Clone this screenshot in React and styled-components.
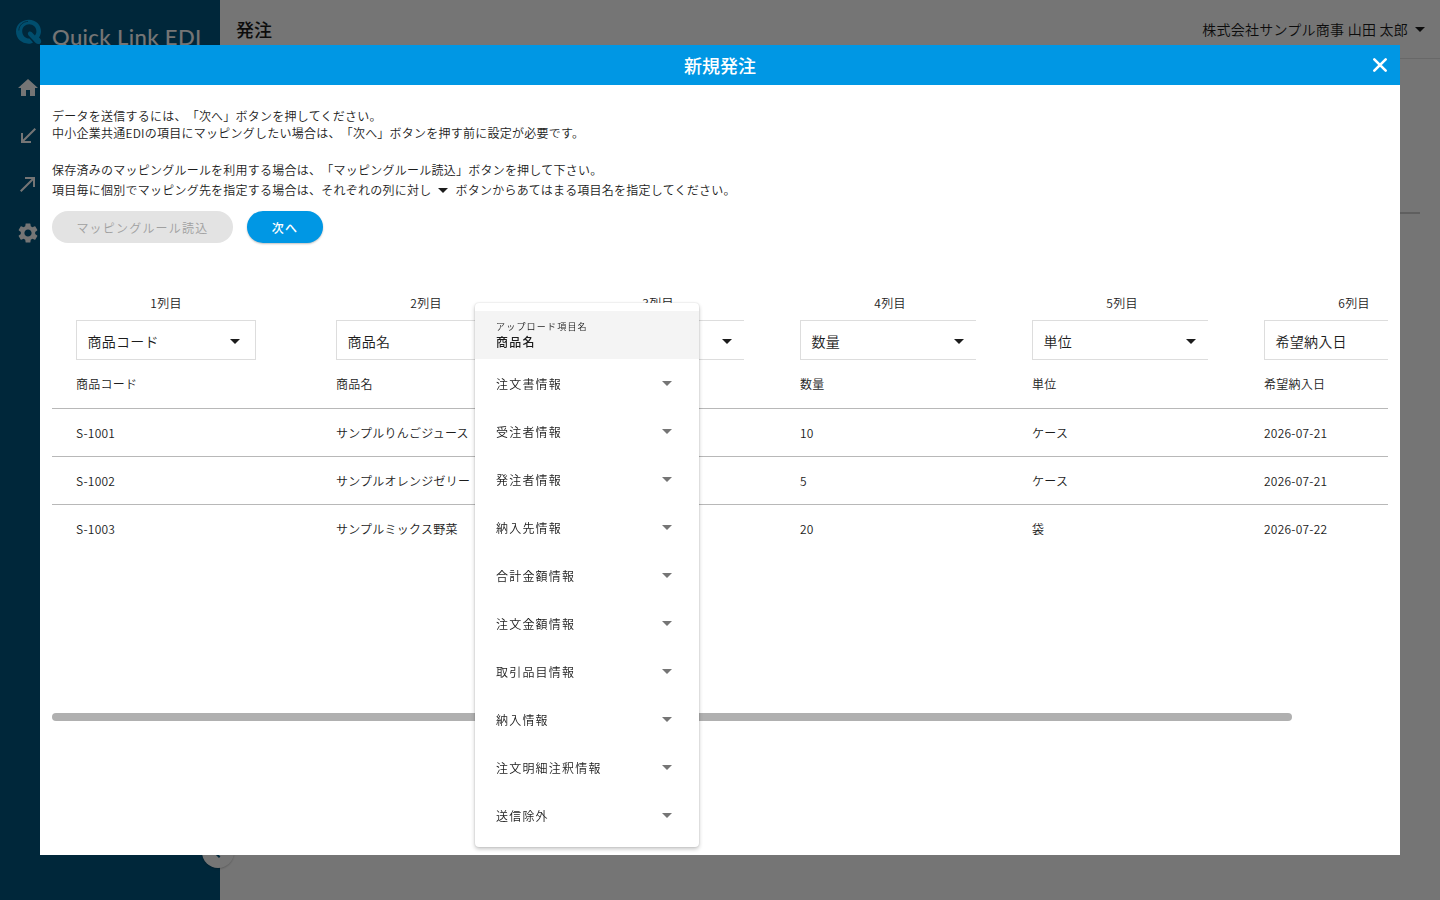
import React from 'react';
import styled, { createGlobalStyle } from 'styled-components';
import {
  MdArrowDropDown,
  MdCallMade,
  MdCallReceived,
  MdChevronLeft,
  MdHome,
  MdSettings,
} from 'react-icons/md';

const Colors = {
  NAVY: '#00557e',
  BLUE: '#0097e4',
  LOGO: '#00aaf0',
  TEXT: '#1c1c1c',
  WHITE: '#ffffff',
  GRAY: '#e3e3e3',
  GRAY_TEXT: '#a0a0a0',
  BORDER: '#dddddd',
  ROW_LINE: '#b8b8b8',
};

const GlobalStyle = createGlobalStyle`
  * {
    box-sizing: border-box;
  }

  body {
    margin: 0;
    overflow: hidden;
    color: ${Colors.TEXT};
    font-family: 'Noto Sans CJK JP', sans-serif;
    font-size: 12px;
    font-weight: 350;
    letter-spacing: 0.02em;
    text-spacing-trim: space-all;
  }

  svg {
    display: block;
    flex: none;
  }
`;

const Page = styled.div`
  display: flex;
  width: 100vw;
  height: 100vh;
  background-color: ${Colors.WHITE};
`;

const Sidebar = styled.nav`
  position: relative;
  width: 220px;
  flex: none;
  padding: 16px 16px 0;
  color: ${Colors.WHITE};
  background-color: ${Colors.NAVY};
`;

const Brand = styled.div`
  display: flex;
  height: 36px;
`;

const BrandName = styled.span`
  margin: 8px 0 0 10px;
  font-family: Lato, sans-serif;
  font-size: 22px;
  font-weight: 500;
  line-height: 26px;
  letter-spacing: 0.4px;
  white-space: nowrap;
`;

const SideMenu = styled.div`
  display: flex;
  flex-direction: column;
  gap: 24.2px;
  margin-top: 24px;
`;

const CollapseButton = styled.button`
  position: absolute;
  right: -14px;
  bottom: 32px;
  display: flex;
  align-items: center;
  justify-content: center;
  width: 32px;
  height: 32px;
  padding: 0 2px 0 0;
  border: 0;
  border-radius: 50%;
  color: ${Colors.NAVY};
  background-color: ${Colors.WHITE};
  box-shadow: 0 1px 2px rgba(0, 0, 0, 0.2);
`;

const Main = styled.main`
  flex: 1;
`;

const TopBar = styled.header`
  display: flex;
  align-items: center;
  justify-content: space-between;
  height: 59px;
  padding: 0 8px 0 16px;
  border-bottom: 1px solid #e3e3e3;
`;

const PageTitle = styled.h1`
  margin: 0;
  font-size: 18px;
  font-weight: 500;
  letter-spacing: 0;
`;

const User = styled.div`
  display: flex;
  align-items: center;
  font-size: 14px;
`;

const TabLine = styled.div`
  margin: 153px 20px 0;
  height: 2px;
  background-color: #cfcfcf;
`;

const Overlay = styled.div`
  position: fixed;
  inset: 0;
  display: flex;
  align-items: center;
  justify-content: center;
  background-color: rgba(0, 0, 0, 0.54);
`;

const Modal = styled.section`
  display: flex;
  flex-direction: column;
  width: 1360px;
  height: 810px;
  background-color: ${Colors.WHITE};
`;

const ModalHeader = styled.div`
  display: grid;
  grid-template-columns: 40px 1fr 40px;
  align-items: center;
  justify-items: center;
  height: 40px;
  flex: none;
  color: ${Colors.WHITE};
  background-color: ${Colors.BLUE};
`;

const ModalTitle = styled.h2`
  grid-column: 2;
  margin: 0;
  font-size: 18px;
  font-weight: 500;
  letter-spacing: 0;
`;

const ModalBody = styled.div`
  display: flex;
  flex-direction: column;
  padding: 22px 12px 0;
`;

const Description = styled.p`
  margin: 0 0 ${({ $gap }) => $gap || 0}px;
  line-height: 17px;
`;

const InlineDescription = styled.div`
  display: flex;
  align-items: center;
  height: 23px;
`;

const ButtonGroup = styled.div`
  display: flex;
  gap: 14.6px;
  margin-top: 10px;
`;

const PillButton = styled.button`
  height: 32px;
  padding: 0 24.4px;
  border: 0;
  border-radius: 16px;
  color: ${Colors.WHITE};
  font: 500 12px 'Noto Sans CJK JP', sans-serif;
  letter-spacing: 0.1em;
  background-color: ${Colors.BLUE};
  box-shadow: 0 1px 2px rgba(0, 0, 0, 0.25);

  &:disabled {
    color: ${Colors.GRAY_TEXT};
    font-weight: 350;
    background-color: ${Colors.GRAY};
    box-shadow: none;
  }
`;

const TableScroller = styled.div`
  height: 470px;
  margin-top: 51px;
  overflow: hidden;
`;

const TableRow = styled.div`
  display: grid;
  grid-template-columns: 260px repeat(4, 232px) 252px;
  align-items: center;
  width: 1440px;
  height: 48px;
  border-bottom: 1px solid ${({ $last }) => ($last ? 'transparent' : Colors.ROW_LINE)};
`;

const HeadRow = styled(TableRow)`
  padding-bottom: 2px;
`;

const SelectRow = styled(TableRow)`
  align-items: start;
  height: 67px;
  border-bottom: 0;
`;

const Cell = styled.div`
  padding: ${({ $first }) => ($first ? '0 56px 0 24px' : '0 32px 0 24px')};
  white-space: nowrap;
`;

const SelectClip = styled.div`
  overflow: hidden;
`;

const ColumnLabel = styled.div`
  width: 180px;
  height: 26px;
  line-height: 18px;
  text-align: center;
`;

const Select = styled.div`
  display: flex;
  align-items: center;
  justify-content: space-between;
  width: 180px;
  height: 40px;
  padding: 2px 8px 0 10.5px;
  border: 1px solid ${Colors.BORDER};
  font-size: 14px;
`;

const SelectValue = styled.span`
  padding-bottom: 1px;
`;

const ScrollTrack = styled.div`
  height: 8px;
  margin-top: -51px;
`;

const ScrollThumb = styled.div`
  width: 1239.5px;
  height: 8px;
  border-radius: 4px;
  background-color: #b0b0b0;
`;

// Opened from the select of the 2nd column, over the table.
const Menu = styled.div`
  position: absolute;
  top: 303px;
  left: 475px;
  width: 224px;
  padding: 8px 0;
  border-radius: 4px;
  letter-spacing: 0.1em;
  background-color: ${Colors.WHITE};
  box-shadow: 0 2px 4px rgba(0, 0, 0, 0.24), 0 0 2px rgba(0, 0, 0, 0.14);
`;

const MenuHeader = styled.div`
  display: flex;
  flex-direction: column;
  justify-content: center;
  height: 48px;
  padding: 0 21px;
  background-color: #f4f4f4;
`;

const MenuCaption = styled.span`
  font-size: 9px;
  line-height: 14px;
`;

const MenuValue = styled.span`
  font-weight: 500;
  line-height: 16px;
`;

const MenuItem = styled.div`
  display: flex;
  align-items: center;
  justify-content: space-between;
  height: 48px;
  padding: 0 20px 0 21px;

  svg {
    color: #757575;
  }
`;

const columns = ['商品コード', '商品名', '', '数量', '単位', '希望納入日'];

const rows = [
  ['S-1001', 'サンプルりんごジュース', '', '10', 'ケース', '2026-07-21'],
  ['S-1002', 'サンプルオレンジゼリー', '', '5', 'ケース', '2026-07-21'],
  ['S-1003', 'サンプルミックス野菜', '', '20', '袋', '2026-07-22'],
];

const menuItems = [
  '注文書情報',
  '受注者情報',
  '発注者情報',
  '納入先情報',
  '合計金額情報',
  '注文金額情報',
  '取引品目情報',
  '納入情報',
  '注文明細注釈情報',
  '送信除外',
];

const Logo = () => (
  <svg width="26" height="30" viewBox="0 0 26 30">
    <path
      fill={Colors.LOGO}
      d="M13 3.8C19.8 3.8 25 8.8 25 15.3C25 17.6 24.2 19.8 22.9 21.6C24.3 22.6 25.2 23.8 25.2 25.4C25.2 27.3 23.8 28 22.4 28C20.4 28 19 26.2 17.6 24.7L12.6 19.4C11.6 18.2 11.6 16.9 12.6 16C13.6 15.2 14.9 15.4 15.8 16.3L18.9 19.4C19.9 18.3 20.4 16.8 20.4 15.2C20.4 11.2 17.2 8.2 13.2 8.2C9.2 8.2 6.2 11.3 6.2 15.2C6.2 19.2 9.2 22.6 13.4 22.6C14.6 23.6 15.6 25 17 26.5C15.8 27.4 14.3 27.7 12.6 27.7C5.6 27.7 0 22.6 0 15.6C0 8.8 5.6 3.8 13 3.8Z"
    />
    <path
      d="M2.8 14.5C3 8.9 7.4 5.6 12 5.4"
      fill="none"
      stroke={Colors.NAVY}
      strokeWidth="0.8"
    />
  </svg>
);

const CloseIcon = () => (
  <svg width="24" height="24" viewBox="0 0 24 24" fill="none">
    <path
      d="M6.3 6.3L17.7 17.7M17.7 6.3L6.3 17.7"
      stroke="currentColor"
      strokeWidth="2.6"
      strokeLinecap="round"
    />
  </svg>
);

const App = () => (
  <>
    <GlobalStyle />
    <Page>
      <Sidebar>
        <Brand>
          <Logo />
          <BrandName>Quick Link EDI</BrandName>
        </Brand>
        <SideMenu>
          <MdHome size={24} />
          <MdCallReceived size={24} />
          <MdCallMade size={24} />
          <MdSettings size={24} />
        </SideMenu>
        <CollapseButton>
          <MdChevronLeft size={24} />
        </CollapseButton>
      </Sidebar>
      <Main>
        <TopBar>
          <PageTitle>発注</PageTitle>
          <User>
            株式会社サンプル商事 山田 太郎
            <MdArrowDropDown size={24} />
          </User>
        </TopBar>
        <TabLine />
      </Main>
    </Page>
    <Overlay>
      <Modal>
        <ModalHeader>
          <ModalTitle>新規発注</ModalTitle>
          <CloseIcon />
        </ModalHeader>
        <ModalBody>
          <Description>データを送信するには、「次へ」ボタンを押してください。</Description>
          <Description $gap={20}>
            中小企業共通EDIの項目にマッピングしたい場合は、「次へ」ボタンを押す前に設定が必要です。
          </Description>
          <Description>
            保存済みのマッピングルールを利用する場合は、「マッピングルール読込」ボタンを押して下さい。
          </Description>
          <InlineDescription>
            項目毎に個別でマッピング先を指定する場合は、それぞれの列に対し
            <MdArrowDropDown size={24} />
            ボタンからあてはまる項目名を指定してください。
          </InlineDescription>
          <ButtonGroup>
            <PillButton disabled>マッピングルール読込</PillButton>
            <PillButton>次へ</PillButton>
          </ButtonGroup>
          <TableScroller>
            <SelectRow>
              {columns.map((name, i) => (
                <Cell key={i} $first={i === 0}>
                  <SelectClip>
                    <ColumnLabel>{i + 1}列目</ColumnLabel>
                    <Select>
                      <SelectValue>{name}</SelectValue>
                      <MdArrowDropDown size={24} />
                    </Select>
                  </SelectClip>
                </Cell>
              ))}
            </SelectRow>
            <HeadRow>
              {columns.map((name, i) => (
                <Cell key={i} $first={i === 0}>
                  {name}
                </Cell>
              ))}
            </HeadRow>
            {rows.map((row, i) => (
              <TableRow key={i} $last={i === rows.length - 1}>
                {row.map((value, j) => (
                  <Cell key={j} $first={j === 0}>
                    {value}
                  </Cell>
                ))}
              </TableRow>
            ))}
          </TableScroller>
          <ScrollTrack>
            <ScrollThumb />
          </ScrollTrack>
        </ModalBody>
      </Modal>
    </Overlay>
    <Menu>
      <MenuHeader>
        <MenuCaption>アップロード項目名</MenuCaption>
        <MenuValue>商品名</MenuValue>
      </MenuHeader>
      {menuItems.map((item) => (
        <MenuItem key={item}>
          {item}
          <MdArrowDropDown size={24} />
        </MenuItem>
      ))}
    </Menu>
  </>
);

export default App;
